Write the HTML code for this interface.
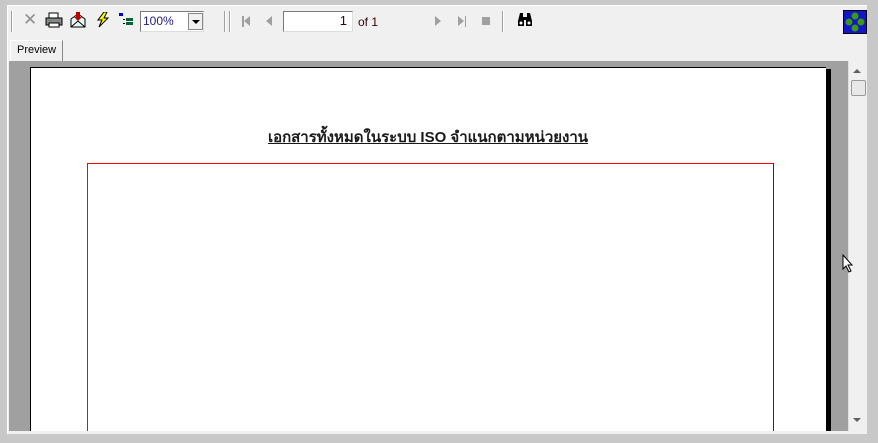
<!DOCTYPE html>
<html><head><meta charset="utf-8"><style>
*{margin:0;padding:0;box-sizing:border-box}
body{width:878px;height:443px;background:#c8c8c8;position:relative;overflow:hidden;font-family:"Liberation Sans",sans-serif;font-size:11px}
.a{position:absolute}
</style></head><body>
<div class="a" style="left:7px;top:5px;width:860px;height:429px;background:#f0f0f0;border-left:1px solid #fff;border-top:1px solid #fff"></div>
<div class="a" style="left:11px;top:11px;width:2px;height:21px;border-left:1px solid #a0a0a0;border-right:1px solid #fff"></div>
<div class="a" style="left:23px;top:10px;color:#909090;font-size:17px">✕</div>
<svg class="a" style="left:45px;top:12px" width="18" height="16"><rect x="4" y="1" width="9" height="5" fill="#fff" stroke="#000"/><rect x="1" y="6" width="16" height="7" fill="#888" stroke="#000"/><rect x="4" y="11" width="10" height="4" fill="#fff" stroke="#000"/><rect x="4" y="8" width="2" height="1" fill="#0c0"/></svg>
<svg class="a" style="left:70px;top:11px" width="17" height="18"><path d="M1 8 L8 3 L15 8 L15 16 L1 16Z" fill="#e8f8f8" stroke="#000"/><path d="M1 16 L8 10 L15 16" fill="none" stroke="#000"/><path d="M6 1 h4 v5 h2 l-4 4 l-4 -4 h2z" fill="#b00"/></svg>
<svg class="a" style="left:96px;top:12px" width="14" height="16"><path d="M8 0 L2 8 L6 8 L3 15 L12 6 L8 6 L11 0Z" fill="#ff0" stroke="#000" stroke-width="1"/></svg>
<svg class="a" style="left:119px;top:13px" width="14" height="14"><rect x="0" y="0" width="4" height="3" fill="#00c"/><rect x="4" y="6" width="2" height="1" fill="#000"/><rect x="4" y="10" width="2" height="1" fill="#000"/><rect x="7" y="5" width="7" height="3" fill="#063"/><rect x="7" y="9" width="7" height="3" fill="#063"/></svg>
<div class="a" style="left:140px;top:11px;width:64px;height:21px;background:#fff;border:1px solid #7a7a7a;border-right-color:#ddd;border-bottom-color:#ddd;font-size:12px;color:#202080;padding:2px 0 0 2px">100%</div>
<div class="a" style="left:188px;top:13px;width:15px;height:17px;background:#f0f0f0;border:1px solid #888"></div>
<div class="a" style="left:192px;top:20px;border-left:4px solid transparent;border-right:4px solid transparent;border-top:4px solid #000"></div>
<div class="a" style="left:224px;top:11px;width:2px;height:21px;border-left:1px solid #a0a0a0;border-right:1px solid #fff"></div>
<div class="a" style="left:229px;top:11px;width:2px;height:21px;border-left:1px solid #a0a0a0;border-right:1px solid #fff"></div>
<div class="a" style="left:242px;top:16px;width:2px;height:11px;background:#a0a0a0"></div>
<div class="a" style="left:244px;top:16px;border-top:5px solid transparent;border-bottom:5px solid transparent;border-right:6px solid #a0a0a0"></div>
<div class="a" style="left:266px;top:16px;border-top:5px solid transparent;border-bottom:5px solid transparent;border-right:6px solid #a0a0a0"></div>
<div class="a" style="left:283px;top:11px;width:70px;height:21px;background:#fff;border:1px solid #7a7a7a;border-right-color:#ddd;border-bottom-color:#ddd;font-size:13px;color:#400;text-align:right;padding:1px 5px 0 0">1</div>
<div class="a" style="left:358px;top:15px;font-size:12px;color:#300">of 1</div>
<div class="a" style="left:435px;top:16px;border-top:5px solid transparent;border-bottom:5px solid transparent;border-left:6px solid #a0a0a0"></div>
<div class="a" style="left:458px;top:16px;border-top:5px solid transparent;border-bottom:5px solid transparent;border-left:6px solid #a0a0a0"></div>
<div class="a" style="left:465px;top:16px;width:1px;height:11px;background:#a0a0a0"></div>
<div class="a" style="left:482px;top:17px;width:8px;height:8px;background:#a0a0a0"></div>
<div class="a" style="left:502px;top:11px;width:2px;height:21px;border-left:1px solid #a0a0a0;border-right:1px solid #fff"></div>
<svg class="a" style="left:517px;top:12px" width="16" height="15"><path d="M3 1h3v4h4V1h3l2 8v5h-6V8h-2v6H1V9z" fill="#000"/><circle cx="4" cy="11" r="1.5" fill="#fff"/><circle cx="12" cy="11" r="1.5" fill="#fff"/></svg>
<svg class="a" style="left:843px;top:10px" width="24" height="24"><rect width="24" height="24" fill="#000"/><rect x="1" y="1" width="22" height="22" fill="#1414c8"/><circle cx="12" cy="6" r="3.5" fill="#3a9a10"/><circle cx="6" cy="12" r="3.5" fill="#3a9a10"/><circle cx="18" cy="12" r="3.5" fill="#3a9a10"/><circle cx="12" cy="18" r="3.5" fill="#3a9a10"/></svg>
<div class="a" style="left:10px;top:40px;width:53px;height:21px;background:#f0f0f0;border:1px solid #fff;border-right:1px solid #888;border-bottom:none;font-size:11px;padding:3px 0 0 6px;color:#000">Preview</div>
<div class="a" style="left:8px;top:61px;width:859px;height:1px;background:#fff"></div>
<div class="a" style="left:9px;top:61px;width:839px;height:370px;background:#a0a0a0"></div>
<div class="a" style="left:30px;top:67px;width:796px;height:364px;background:#fff;border-left:1px solid #000;border-top:1px solid #000"></div>
<div class="a" style="left:826px;top:69px;width:5px;height:362px;background:#000"></div>
<div class="a" style="left:87px;top:163px;width:687px;height:1px;background:#ff0000"></div>
<div class="a" style="left:87px;top:163px;width:1px;height:268px;background:#ff0000"></div>
<div class="a" style="left:773px;top:163px;width:1px;height:268px;background:#5a2020"></div>
<div class="a" style="left:30px;top:125px;width:796px;text-align:center;font-size:15px;font-weight:bold;color:#1a1a1a;text-decoration:underline;font-family:'Liberation Sans',Tahoma,'DejaVu Sans',sans-serif">เอกสารทั้งหมดในระบบ ISO จำแนกตามหน่วยงาน</div>
<div class="a" style="left:848px;top:61px;width:19px;height:370px;background:#f0f0f0;border-left:1px solid #e0e0e0"></div>
<div class="a" style="left:853px;top:69px;border-left:4px solid transparent;border-right:4px solid transparent;border-bottom:4px solid #606060"></div>
<div class="a" style="left:851px;top:80px;width:15px;height:16px;background:#e8e8e8;border:1px solid #999;border-radius:2px"></div>
<div class="a" style="left:853px;top:418px;border-left:4px solid transparent;border-right:4px solid transparent;border-top:4px solid #606060"></div>
<svg class="a" style="left:842px;top:254px" width="12" height="19"><path d="M1 1 L1 15 L4 12 L7 18 L9 17 L6 11 L10 11Z" fill="#fff" stroke="#000"/></svg>
</body></html>
